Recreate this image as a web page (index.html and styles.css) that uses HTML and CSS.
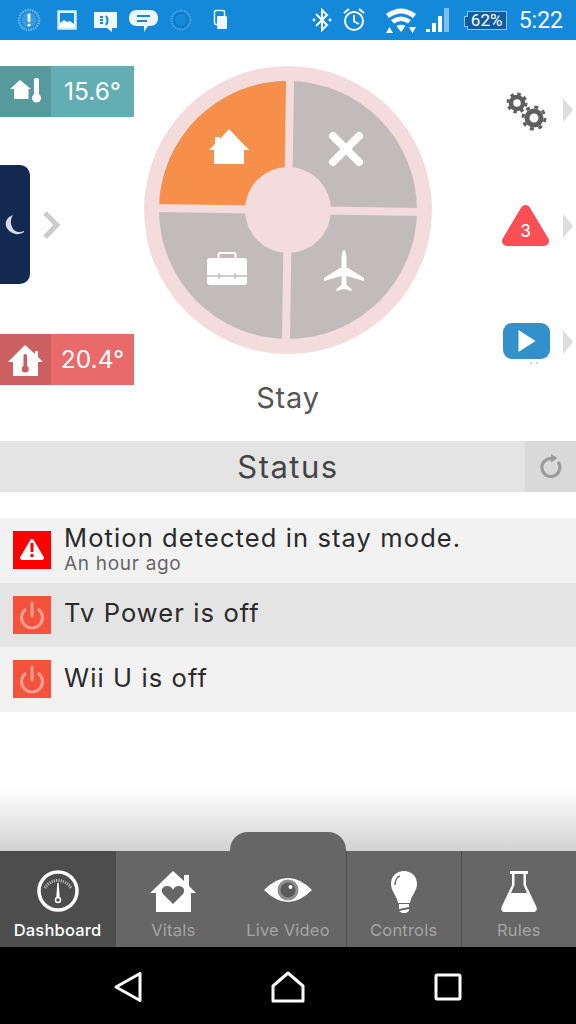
FILE: index.html
```html
<!DOCTYPE html>
<html lang="en">
<head>
    <meta charset="UTF-8">
    <meta name="viewport" content="width=device-width, initial-scale=1.0">
    <title>Dashboard</title>
    <link rel="stylesheet" href="styles.css">
</head>
<body>
    <div class="status-bar">
        <div class="sb-left">
            <svg class="sb-icon" viewBox="0 0 38 40"><circle cx="19" cy="20" r="10" fill="none" stroke="#6fb8ea" stroke-width="2.5" stroke-dasharray="1.5 1"/><circle cx="19" cy="20" r="7.5" fill="#3a9be0"/><rect x="17.6" y="13.5" width="2.8" height="8.5" rx="1.2" fill="#eef7fd"/><circle cx="19" cy="25" r="1.6" fill="#eef7fd"/></svg>
            <svg class="sb-icon" viewBox="0 0 38 40"><rect x="10" y="11" width="18" height="18" fill="#e8f4fc" stroke="#cfe7f8" stroke-width="1.5"/><rect x="12" y="13" width="14" height="14" fill="#1489d9"/><path d="M12 27v-4l4-3 3 2 3-1 4 3v3z" fill="#fff"/></svg>
            <svg class="sb-icon" viewBox="0 0 38 40"><path d="M8 12h23v16h-5v4l-5-4H8z" fill="#eef7fd"/><path d="M14 17h3M14 20h3M14 23h3" stroke="#1489d9" stroke-width="2"/><path d="M20 16q3 4 0 9" fill="none" stroke="#1489d9" stroke-width="2"/></svg>
            <svg class="sb-icon" viewBox="0 0 38 40"><path d="M13 10h13c5 0 8 3 8 8s-3 8-8 8h-2l-4 6v-6h-7c-5 0-8-3-8-8s3-8 8-8z" fill="#eef7fd"/><path d="M13 16h13M13 21h10" stroke="#1489d9" stroke-width="2.2"/></svg>
            <svg class="sb-icon" viewBox="0 0 38 40"><circle cx="19" cy="20" r="9.5" fill="none" stroke="#4ba5e3" stroke-width="2" stroke-dasharray="1.5 1"/><circle cx="19" cy="20" r="7" fill="none" stroke="#0f76c2" stroke-width="1.500"/></svg>
            <svg class="sb-icon" viewBox="0 0 38 40"><rect x="14.5" y="10.5" width="10" height="14" rx="1.5" fill="none" stroke="#e8f4fc" stroke-width="1.5"/><rect x="17" y="16" width="10" height="13" rx="1" fill="#eef7fd"/></svg>
        </div>
        <div class="sb-right">
            <svg class="sb-bt" viewBox="0 0 20 24"><path d="M4 6l11 11-5 5V2l5 5L4 18" fill="none" stroke="#fff" stroke-width="2"/><circle cx="2" cy="12" r="1.4" fill="#fff"/><circle cx="18" cy="12" r="1.4" fill="#fff"/></svg>
            <svg class="sb-alarm" viewBox="0 0 24 26"><circle cx="12" cy="14" r="9" fill="none" stroke="#fff" stroke-width="2"/><path d="M12 8v6.5l5 2.5" fill="none" stroke="#fff" stroke-width="1.8"/><path d="M2 6l5-4M22 6l-5-4" stroke="#fff" stroke-width="2"/></svg>
            <svg class="sb-wifi" viewBox="0 0 32 26"><path d="M1 7q15-11 30 0l-3 4Q16 2 4 11z" fill="#fff"/><path d="M6 13q10-7 20 0l-3 3.500q-7-5-14 0z" fill="#fff"/><path d="M11.500 19q4.500-2.500 9 0l-4.500 6z" fill="#fff"/><path d="M1 26l3.500-6 3.500 6zM24 20h7l-3.500 6z" fill="#fff"/></svg>
            <svg class="sb-signal" viewBox="0 0 25 26"><path d="M1 25v-3h4v3zM7 25v-9h4v9zM13 25V9h4v16z" fill="#fff"/><path d="M19 25V1h5v24z" fill="#7cbdea"/></svg>
            <div class="sb-battery">62%</div>
            <span class="sb-time">5:22</span>
        </div>
    </div>

    <div class="hero">
        <div class="hero-left">
            <div class="temp-chip teal">
                <div class="chip-icon">
                    <svg viewBox="0 0 51 51" width="51" height="51"><path d="M20 14l11 9h-2.500v10H14V23h-4z" fill="#fff"/><rect x="34" y="12" width="5" height="20" rx="2" fill="#fff"/><circle cx="36.500" cy="32" r="4.500" fill="#fff"/></svg>
                </div>
                <span class="chip-value">15.6°</span>
            </div>
            <div class="mode-row">
                <div class="mode-card">
                    <svg viewBox="0 0 20 20" width="20" height="20"><path d="M8 0C2 2 0 7 1 11s7 9 13 8 5-3 5-3c-5 2-10 1-12-4S6 3 8 0z" fill="#d5dae6"/></svg>
                </div>
                <svg class="chevron" viewBox="0 0 18 28"><path d="M2 2l12 12L2 26" fill="none" stroke="#cccccc" stroke-width="5"/></svg>
            </div>
            <div class="temp-chip red">
                <div class="chip-icon">
                    <svg viewBox="0 0 51 51" width="51" height="51"><path d="M25 11l10 9v-3h3v6l5 5h-5v14H13V28H8z" fill="#fff"/><rect x="23.500" y="20" width="3.500" height="14" rx="1.700" fill="#cc5f5f"/><circle cx="25.200" cy="35" r="3.500" fill="#cc5f5f"/></svg>
                </div>
                <span class="chip-value">20.4°</span>
            </div>
        </div>

        <div class="hero-center">
            <svg class="wheel" viewBox="0 0 290 290" width="290" height="290">
                <circle cx="145" cy="145" r="144" fill="#f4dcdc"/>
                <circle cx="145" cy="145" r="129" fill="#c1bcbb"/>
                <g transform="rotate(0.9 145 145)">
                    <path d="M145 145H16A129 129 0 0 1 145 16Z" fill="#f68f49"/>
                    <rect x="141" y="10" width="8" height="270" fill="#f4dcdc"/>
                    <rect x="10" y="141" width="270" height="8" fill="#f4dcdc"/>
                </g>
                <circle cx="145" cy="145" r="43" fill="#f4dcdc"/>
                <path d="M86 64l20 21h-5v14H71V85h-5l6-6v-7h5v2z" fill="#fff"/>
                <path d="M190 71l26 26M216 71l-26 26" stroke="#fff" stroke-width="8" stroke-linecap="round"/>
                <rect x="64" y="193" width="40" height="27" rx="3" fill="#fff"/>
                <rect x="75.500" y="188" width="17" height="6" rx="2" fill="none" stroke="#fff" stroke-width="2"/>
                <path d="M64 211h40M76 208v6M92 208v6" stroke="#c1bcbb" stroke-width="1.300"/>
                <path d="M201 185c1.500 0 2.500 4 2.500 8v9l17.500 11v3l-17.500-5v9l5 4v2l-7.500-2-7.500 2v-2l5-4v-9l-17.500 5v-3l17.500-11v-9c0-4 1-8 2.500-8z" fill="#fff"/>
            </svg>
            <div class="mode-label">Stay</div>
        </div>

        <div class="hero-right">
            <div class="side-row">
                <svg class="side-icon" viewBox="0 0 50 44">
                    <g fill="none" stroke="#5f5f5f">
                        <circle cx="16" cy="15" r="6" stroke-width="4.500"/>
                        <circle cx="16" cy="15" r="9" stroke-width="3" stroke-dasharray="3.500 3.570"/>
                        <circle cx="33" cy="30" r="7" stroke-width="5"/>
                        <circle cx="33" cy="30" r="11" stroke-width="3" stroke-dasharray="4 4.640"/>
                    </g>
                </svg>
                <div class="side-arrow"></div>
            </div>
            <div class="side-row">
                <svg class="side-icon" viewBox="0 0 50 44">
                    <path d="M24.500 6L43 37H6z" fill="#fb4f55" stroke="#fb4f55" stroke-width="10" stroke-linejoin="round"/>
                    <text class="badge-num" x="24.500" y="33" text-anchor="middle">3</text>
                </svg>
                <div class="side-arrow"></div>
            </div>
            <div class="side-row">
                <svg class="side-icon" viewBox="0 0 50 44">
                    <rect x="2" y="3" width="47" height="36" rx="9" fill="#3390cb"/>
                    <path d="M17.500 10l17 11-17 11z" fill="#fff"/>
                    <path d="M29 43h2M35 43h2" stroke="#aaaaaa" stroke-width="1"/>
                </svg>
                <div class="side-arrow"></div>
            </div>
        </div>
    </div>

    <div class="section-head">
        <h2>Status</h2>
        <div class="refresh">
            <svg viewBox="0 0 26 28" width="26" height="28"><path d="M13 5.500A9 9 0 1 0 20 9" fill="none" stroke="#9a9a9a" stroke-width="3"/><path d="M13 1l6.500 4-6.500 4.500z" fill="#9a9a9a"/></svg>
        </div>
    </div>

    <div class="status-list">
        <div class="status-item">
            <div class="item-icon alert">
                <svg viewBox="0 0 38 38" width="38" height="38"><path d="M19 10l10 17H9z" fill="#fff" stroke="#fff" stroke-width="4" stroke-linejoin="round"/><rect x="17.500" y="12" width="3" height="9" fill="#f00"/><rect x="17.500" y="23" width="3" height="3" fill="#f00"/></svg>
            </div>
            <div class="item-text">
                <div class="item-title">Motion detected in stay mode.</div>
                <div class="item-sub">An hour ago</div>
            </div>
        </div>
        <div class="status-item alt">
            <div class="item-icon off">
                <svg viewBox="0 0 38 38" width="38" height="38"><path d="M13 13a10.500 10.500 0 1 0 12 0" fill="none" stroke="#f99f90" stroke-width="3"/><path d="M19 7v13" stroke="#f99f90" stroke-width="3" stroke-linecap="round"/></svg>
            </div>
            <div class="item-title">Tv Power is off</div>
        </div>
        <div class="status-item">
            <div class="item-icon off">
                <svg viewBox="0 0 38 38" width="38" height="38"><path d="M13 13a10.500 10.500 0 1 0 12 0" fill="none" stroke="#f99f90" stroke-width="3"/><path d="M19 7v13" stroke="#f99f90" stroke-width="3" stroke-linecap="round"/></svg>
            </div>
            <div class="item-title">Wii U is off</div>
        </div>
    </div>

    <div class="fade"></div>

    <div class="tabs">
        <div class="tab active">
            <svg viewBox="0 0 50 46" width="50" height="46"><circle cx="25" cy="23" r="19" fill="none" stroke="#fff" stroke-width="3.500"/><path d="M12 20a15 15 0 0 1 26 0" fill="none" stroke="#ccc" stroke-width="3" stroke-dasharray="1 1.300"/><path d="M24.300 15h1.400l1 14h-3.400z" fill="#fff"/><circle cx="25" cy="32" r="2.500" fill="none" stroke="#fff" stroke-width="1.500"/></svg>
            <span>Dashboard</span>
        </div>
        <div class="tab">
            <svg viewBox="0 0 50 46" width="50" height="46"><path d="M25 3l11 10V7h5v11l7 7h-5v19H8V25H2z" fill="#fff"/><path d="M25 36L15 26c-3-4 0-8 4-8 3 0 5 1.500 6 4 1-2.500 3-4 6-4 4 0 7 4 4 8z" fill="#666"/></svg>
            <span>Vitals</span>
        </div>
        <div class="tab raised">
            <svg viewBox="0 0 50 46" width="50" height="46"><path d="M1 22q24-24 48 0Q25 46 1 22z" fill="#fff"/><circle cx="25" cy="22" r="10.500" fill="#8e8e8e"/><circle cx="25" cy="22" r="7.500" fill="#5a5a5a"/><circle cx="27.500" cy="19" r="2" fill="#fff"/></svg>
            <span>Live Video</span>
        </div>
        <div class="tab">
            <svg viewBox="0 0 50 46" width="50" height="46"><path d="M25 3c7 0 13 5 13 13 0 7-6 12-7 19H19c-1-7-7-12-7-19C12 8 18 3 25 3z" fill="#fff"/><path d="M16 17c0-4 2-8 5-9" fill="none" stroke="#666" stroke-width="1.500"/><path d="M20 36h10v3l-10 2zM20 43l10-2v2l-3 2h-4z" fill="#fff"/></svg>
            <span>Controls</span>
        </div>
        <div class="tab">
            <svg viewBox="0 0 50 46" width="50" height="46"><path d="M16 3h18v3h-2v11l10 21c2 4 0 6-3 6H11c-3 0-5-2-3-6l10-21V6h-2z" fill="#fff"/><path d="M20.500 6h9v11l3.500 8H17l3.500-8z" fill="#666"/></svg>
            <span>Rules</span>
        </div>
    </div>

    <div class="android-nav">
        <svg viewBox="0 0 30 32" width="30" height="32"><path d="M27 2.500v27L3 16z" fill="none" stroke="#fff" stroke-width="3" stroke-linejoin="round"/></svg>
        <svg viewBox="0 0 34 32" width="34" height="32"><path d="M2 30V15L17 2l15 13v15z" fill="none" stroke="#fff" stroke-width="3" stroke-linejoin="round"/></svg>
        <svg viewBox="0 0 30 32" width="30" height="32"><rect x="3" y="4" width="24" height="24" rx="1" fill="none" stroke="#fff" stroke-width="3"/></svg>
    </div>
</body>
</html>
```
FILE: styles.css
```css
* {
    box-sizing: border-box;
}
body {
    font-family: Inter, Arial, sans-serif;
    margin: 0;
    width: 576px;
    height: 1024px;
    overflow: hidden;
    display: flex;
    flex-direction: column;
    background: #fff;
    color: #333;
}

/* phone status bar */
.status-bar {
    height: 40px;
    flex: none;
    background: #1489d9;
    display: flex;
    justify-content: space-between;
    align-items: center;
    padding: 0 13px 0 10px;
}
.sb-left {
    display: flex;
}
.sb-icon {
    width: 38px;
    height: 40px;
}
.sb-right {
    display: flex;
    align-items: center;
}
.sb-bt {
    width: 20px;
    height: 24px;
    margin-right: 10px;
}
.sb-alarm {
    width: 24px;
    height: 26px;
    margin-right: 19px;
}
.sb-wifi {
    width: 32px;
    height: 26px;
    margin-right: 8px;
}
.sb-signal {
    width: 25px;
    height: 26px;
    margin-right: 17px;
}
.sb-battery {
    position: relative;
    width: 40px;
    height: 19px;
    margin-right: 12px;
    background: #0f5d9c;
    border: 1px solid #8cc6ee;
    color: #fff;
    font-family: Roboto, sans-serif;
    font-size: 17px;
    line-height: 17px;
    text-align: center;
}
.sb-battery::before {
    content: "";
    position: absolute;
    left: -4px;
    top: 4px;
    width: 3px;
    height: 9px;
    background: #0f5d9c;
    border: 1px solid #8cc6ee;
    border-right: 0;
}
.sb-time {
    font-family: Roboto, sans-serif;
    font-size: 23px;
    color: #fff;
}

/* mode wheel and the things either side of it */
.hero {
    height: 401px;
    flex: none;
    display: grid;
    grid-template-columns: 143px 290px 143px;
}
.hero-left {
    height: 319px;
    margin-top: 26px;
    display: flex;
    flex-direction: column;
    justify-content: space-between;
}
.temp-chip {
    width: 134px;
    height: 51px;
    display: flex;
    color: #fff;
}
.chip-icon {
    width: 51px;
}
.chip-value {
    flex: 1;
    text-align: center;
    font-size: 24.500px;
    line-height: 51px;
}
.teal {
    background: #63aeb3;
}
.teal .chip-icon {
    background: #569a9e;
}
.red {
    background: #e96a6a;
}
.red .chip-icon {
    background: #cc5f5f;
}
.mode-row {
    display: flex;
    align-items: center;
    gap: 13px;
    margin-bottom: 2px;
}
.mode-card {
    width: 30px;
    height: 119px;
    background: #14294f;
    border-radius: 0 10px 10px 0;
    display: flex;
    align-items: center;
    padding-left: 5px;
}
.chevron {
    width: 18px;
    height: 28px;
}
.hero-center {
    padding-top: 25px;
    text-align: center;
}
.wheel {
    display: block;
}
.mode-label {
    font-size: 29px;
    letter-spacing: 0.8px;
    line-height: 40px;
    margin-top: 23px;
    color: #555;
}
.hero-right {
    padding-top: 12px;
    display: flex;
    flex-direction: column;
}
.side-row {
    height: 116px;
    display: flex;
    align-items: center;
    padding-left: 68px;
    gap: 12px;
}
.side-icon {
    width: 50px;
    height: 44px;
}
.side-arrow {
    border-left: 10px solid #dddddd;
    border-top: 12px solid transparent;
    border-bottom: 12px solid transparent;
}
.badge-num {
    font-size: 17px;
    font-weight: 500;
    fill: #fff;
}

/* status list */
.section-head {
    height: 51px;
    flex: none;
    background: #e4e4e4;
    display: flex;
    align-items: center;
    padding-left: 51px;
}
.section-head h2 {
    flex: 1;
    margin: 0;
    text-align: center;
    font-size: 31px;
    letter-spacing: 1.5px;
    font-weight: 400;
    color: #444;
}
.refresh {
    width: 51px;
    height: 51px;
    background: #d9d9d9;
    display: flex;
    align-items: center;
    justify-content: center;
}
.status-list {
    margin-top: 26px;
    flex: none;
}
.status-item {
    height: 64.500px;
    background: #f2f2f2;
    display: flex;
    align-items: center;
    padding-left: 13px;
    gap: 13px;
}
.status-item.alt {
    background: #e4e4e4;
}
.item-icon {
    width: 38px;
    height: 38px;
    flex: none;
}
.item-icon svg {
    display: block;
}
.alert {
    background: #f00;
}
.off {
    background: #f4523c;
}
.item-text {
    margin-top: -3px;
}
.item-title {
    font-size: 25.500px;
    letter-spacing: 1.100px;
    line-height: 30px;
    color: #2a2a2a;
    margin-bottom: 3px;
}
.item-sub {
    font-size: 19px;
    letter-spacing: 0.700px;
    line-height: 20px;
    color: #666;
    margin-top: -2px;
}

/* bottom tabs */
.fade {
    flex: 1;
    background: linear-gradient(#fff 55%, #d2d2d2 100%);
}
.tabs {
    height: 96px;
    flex: none;
    display: grid;
    grid-template-columns: repeat(5, 1fr);
    background: #666;
}
.tab {
    background: #666;
    border-left: 1px solid #4d4d4d;
    display: flex;
    flex-direction: column;
    align-items: center;
    padding-top: 17px;
    color: #a5a5a5;
    font-size: 16.500px;
    letter-spacing: 0.200px;
    line-height: 20px;
}
.tab svg {
    flex: none;
    margin-bottom: 6px;
}
.tab.active {
    background: #4d4d4d;
    color: #fff;
    font-weight: 500;
    border-left: 0;
}
.tab.raised {
    margin-top: -19px;
    padding-top: 36px;
    border-radius: 18px 18px 0 0;
    border-left: 0;
}
.android-nav {
    height: 77px;
    flex: none;
    background: #000;
    display: grid;
    grid-template-columns: 256px 64px 256px;
    align-items: center;
    justify-items: center;
    padding-top: 2px;
}
.android-nav svg:first-child {
    justify-self: end;
    margin-right: 113px;
}
.android-nav svg:last-child {
    justify-self: start;
    margin-left: 113px;
}
```
